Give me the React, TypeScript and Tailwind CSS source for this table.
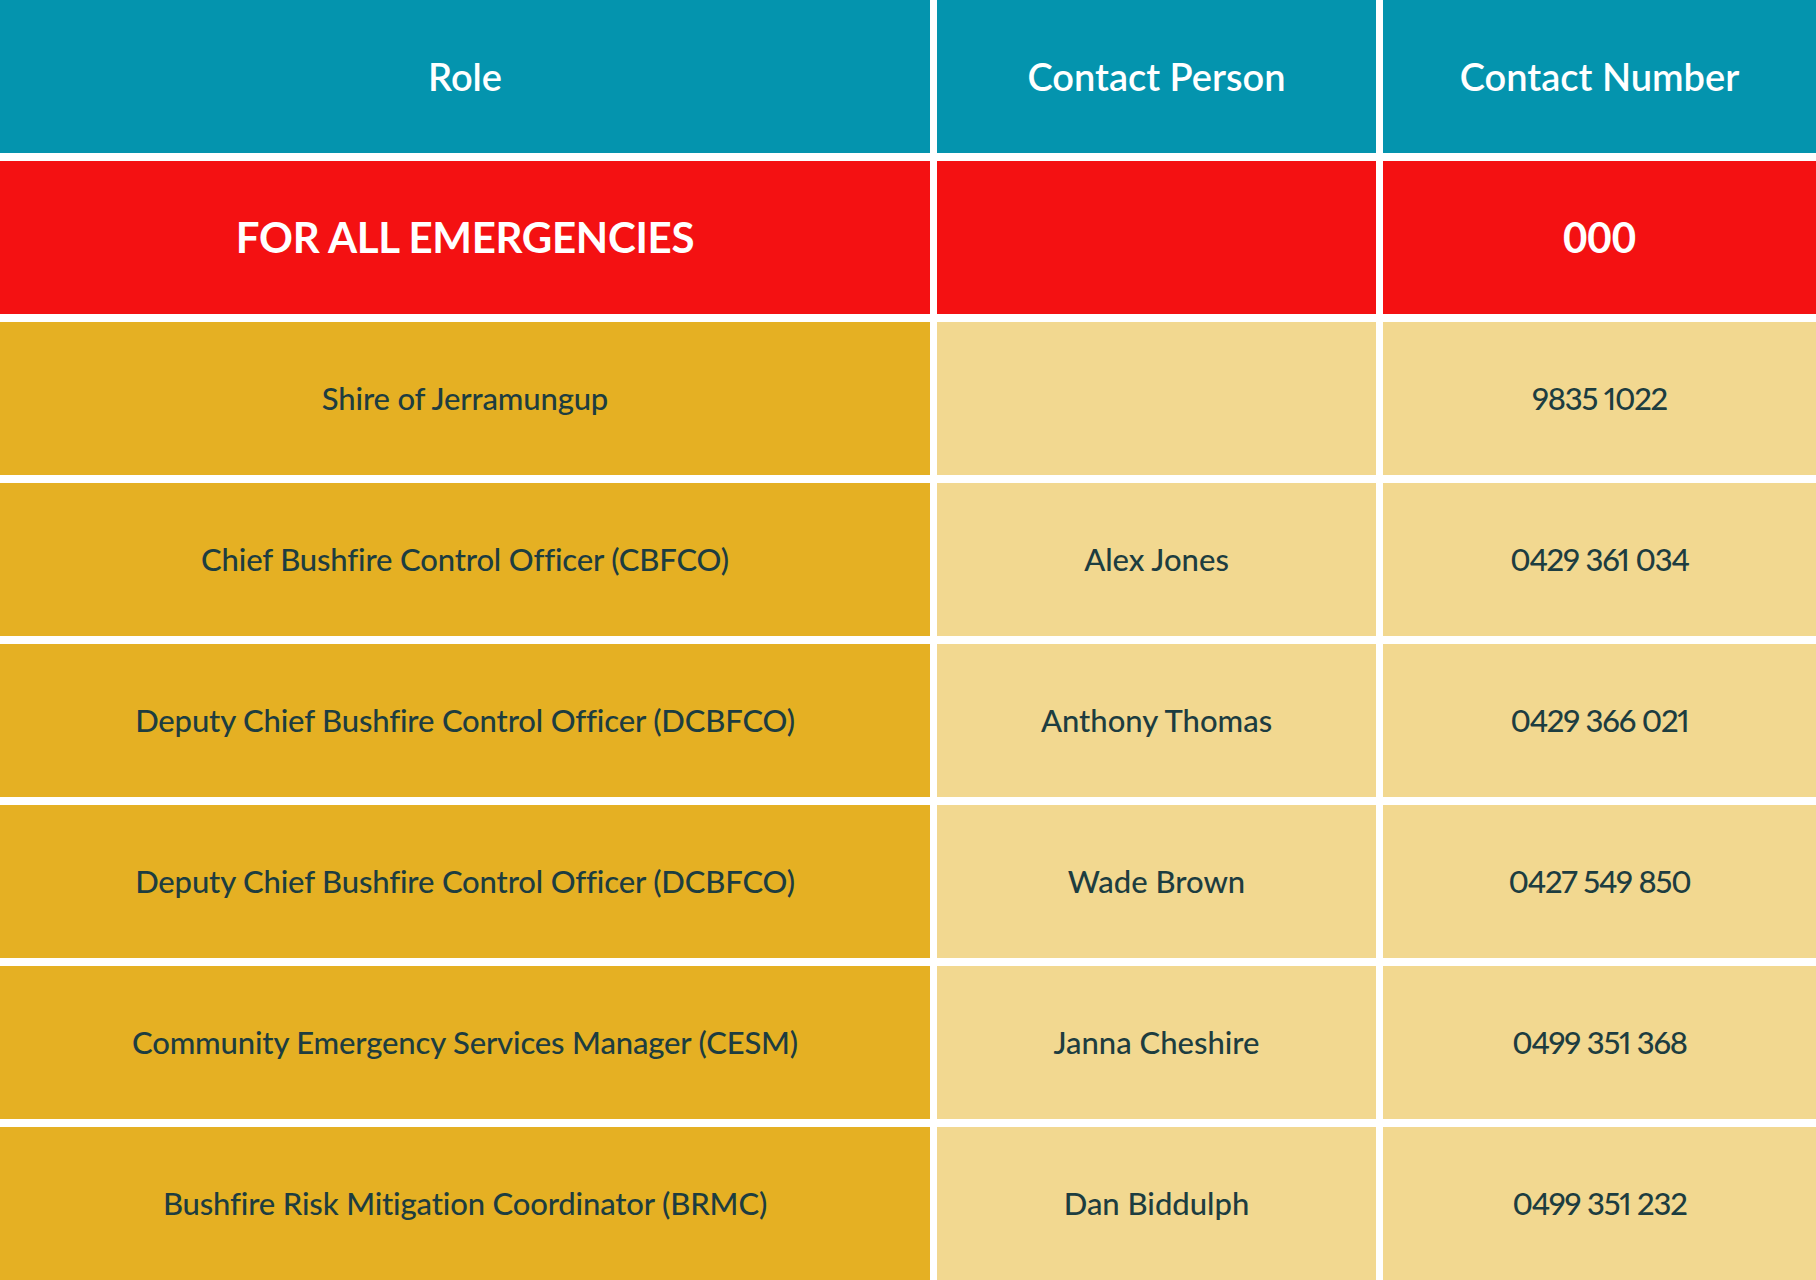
import React from "react";

const rows: [string, string, string][] = [
  ["Shire of Jerramungup", "", "9835 1022"],
  ["Chief Bushfire Control Officer (CBFCO)", "Alex Jones", "0429 361 034"],
  ["Deputy Chief Bushfire Control Officer (DCBFCO)", "Anthony Thomas", "0429 366 021"],
  ["Deputy Chief Bushfire Control Officer (DCBFCO)", "Wade Brown", "0427 549 850"],
  ["Community Emergency Services Manager (CESM)", "Janna Cheshire", "0499 351 368"],
  ["Bushfire Risk Mitigation Coordinator (BRMC)", "Dan Biddulph", "0499 351 232"],
];

export default function App() {
  return (
    <div
      className="w-[1816px] h-[1280px] bg-white grid grid-cols-[930px_439px_1fr] grid-rows-[repeat(8,1fr)] gap-x-[7px] gap-y-[7.5px] overflow-hidden [font-variant-ligatures:none]"
      style={{ fontFamily: "Lato, 'Open Sans', sans-serif" }}
    >
      {["Role", "Contact Person", "Contact Number"].map((h) => (
        <div key={h} className="bg-[#0494ae] flex items-center justify-center text-white text-[38px] font-semibold">
          {h}
        </div>
      ))}
      <div className="bg-[#f41112] flex items-center justify-center text-white text-[42px] font-bold tracking-[-0.3px]">
        FOR ALL EMERGENCIES
      </div>
      <div className="bg-[#f41112]" />
      <div className="bg-[#f41112] flex items-center justify-center text-white text-[42px] font-bold">
        000
      </div>
      {rows.map(([role, person, num], i) => (
        <React.Fragment key={i}>
          <div className="bg-[#e5b023] flex items-center justify-center text-[#1d3d40] text-[31px] font-medium tracking-[-0.15px]">{role}</div>
          <div className="bg-[#f2d890] flex items-center justify-center text-[#1d3d40] text-[31px] font-medium">{person}</div>
          <div className="bg-[#f2d890] flex items-center justify-center text-[#1d3d40] text-[31px] font-medium proportional-nums tracking-[-1.2px]">{num}</div>
        </React.Fragment>
      ))}
    </div>
  );
}
